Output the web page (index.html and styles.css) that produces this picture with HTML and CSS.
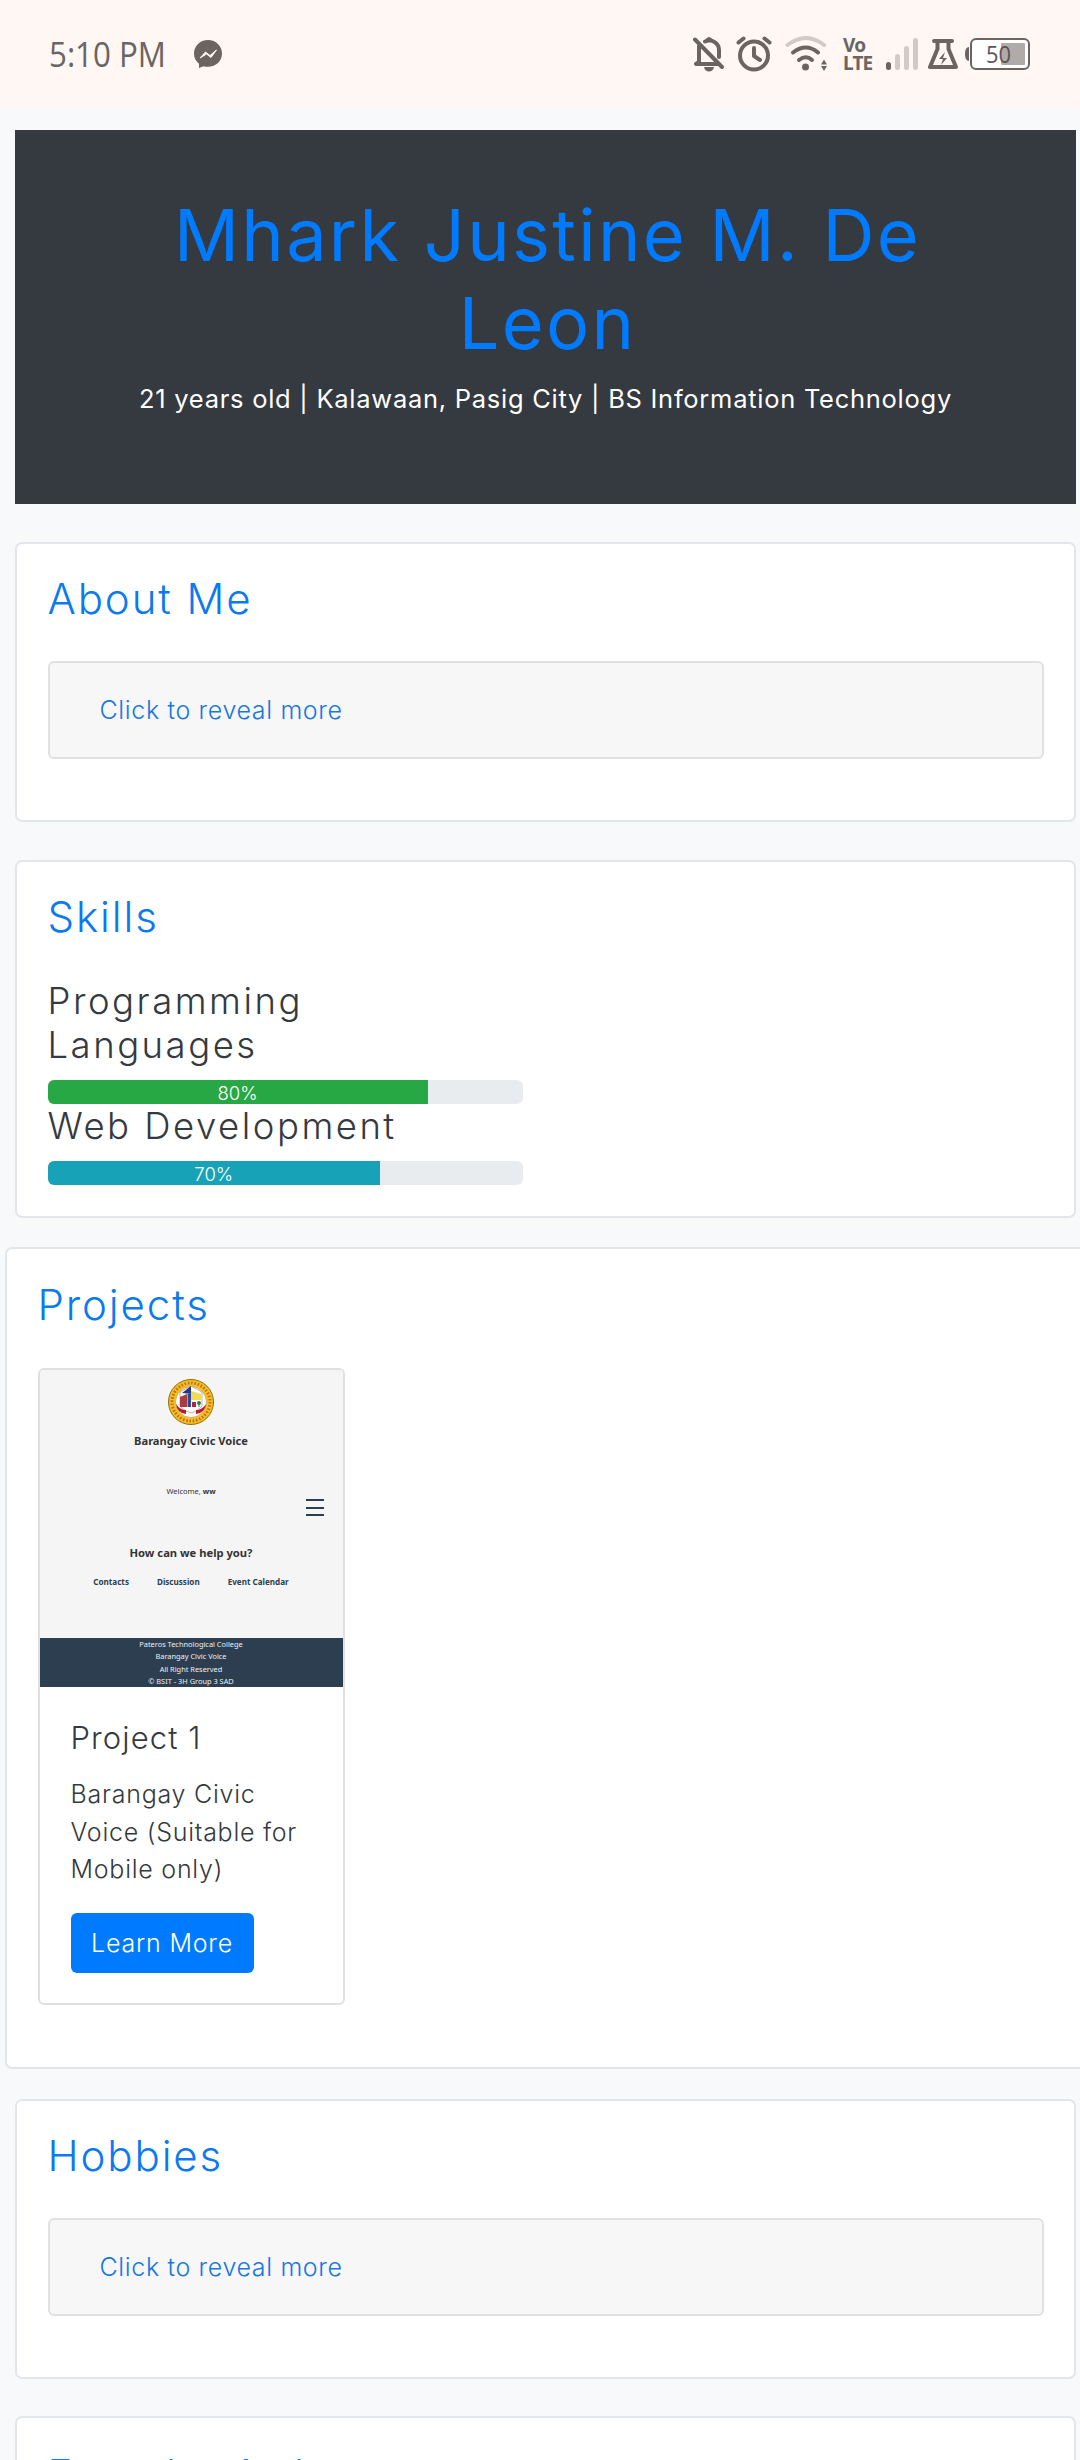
FILE: index.html
```html
<!DOCTYPE html>
<html lang="en">
<head>
<meta charset="utf-8">
<title>Mhark Justine M. De Leon</title>
<link rel="stylesheet" href="styles.css">
</head>
<body>
<div class="status">
  <span class="clock">5:10 PM</span>
  <svg class="messenger" width="28" height="28" viewBox="0 0 28 28"><path d="M14 0C6 0 0 6 0 13.500c0 4.500 2 8 5 10.300V28l4.500-1.800c1.400.4 3 .6 4.500.6 8 0 14-6 14-13.300S22 0 14 0z" fill="#6a6462"/><path d="M6 18l5.500-6 4.500 3.500L22.500 10l-5.500 7.500-4.500-3.500z" fill="#fff7f4" stroke="#fff7f4" stroke-width="1" stroke-linejoin="round"/></svg>
  <div class="status-icons">
    <svg class="i-bell" width="32" height="36" viewBox="0 0 32 36" fill="none" stroke="#6a6462" stroke-width="4"><path d="M6 10v16L3 28h22M12 5.500C20 2.500 26 8 26 14v7M2 3.500l27 27.500" stroke-linejoin="round" stroke-linecap="round"/><path d="M12 4q4-6 8 0zM11 31h10c-1 6-9 6-10 0z" fill="#6a6462" stroke="none"/></svg>
    <svg class="i-alarm" width="36" height="36" viewBox="0 0 36 36" fill="none" stroke="#6a6462" stroke-width="4" stroke-linecap="round"><circle cx="18" cy="19.500" r="14"/><path d="M18 12v8l6 4M2.500 6.500l5-4M33.500 6.500l-5-4" stroke-linejoin="round"/></svg>
    <svg class="i-wifi" width="44" height="36" viewBox="0 0 44 36" fill="none" stroke="#6a6462" stroke-width="4" stroke-linecap="round"><path d="M2.500 9Q21 -5 39 9" stroke="#d0cac8"/><path d="M8 16.500Q21 6.500 33 16.500M14 24Q21 18.500 27 24"/><circle cx="20.500" cy="31" r="3.500" fill="#6a6462" stroke="none"/><path d="M36 28.500l3-5 3 5zM36 30l3 5 3-5z" fill="#6a6462" stroke="none"/></svg>
    <div class="volte"><span>Vo</span><span>LTE</span></div>
    <svg class="i-signal" width="34" height="32" viewBox="0 0 34 32"><rect x="1" y="24" width="5" height="8" rx="2.500" fill="#6a6462"/><rect x="10" y="16" width="5" height="16" rx="2.500" fill="#d0cac8"/><rect x="19" y="8" width="5" height="24" rx="2.500" fill="#d0cac8"/><rect x="28" y="0" width="5" height="32" rx="2.500" fill="#d0cac8"/></svg>
    <svg class="i-flask" width="30" height="30" viewBox="0 0 30 30"><path d="M6 2h18M9.500 2v8L2 28h26L20.500 10V2" fill="none" stroke="#6a6462" stroke-width="4" stroke-linejoin="round" stroke-linecap="round"/><path d="M17 13l-6 7h4l-2 6 6-7h-4z" fill="#6a6462"/></svg>
    <svg class="i-battery" width="66" height="32" viewBox="0 0 66 32"><path d="M4 9v14q-4 0-4-7t4-7z" fill="#6a6462"/><rect x="6" y="1" width="58" height="30" rx="5" fill="#fff" stroke="#6a6462" stroke-width="2"/><rect x="36" y="5" width="24" height="22" rx="1" fill="#b0aaa8"/><text x="21" y="25" class="battery-text" textLength="25" lengthAdjust="spacingAndGlyphs">50</text></svg>
  </div>
</div>
<main class="page">
  <header class="hero">
    <h1>Mhark Justine M. De<br>Leon</h1>
    <p>21 years old | Kalawaan, Pasig City | BS Information Technology</p>
  </header>
  <section class="panel short">
    <h2>About Me</h2>
    <div class="reveal">Click to reveal more</div>
  </section>
  <section class="panel skills">
    <h2>Skills</h2>
    <h3>Programming<br>Languages</h3>
    <div class="progress"><div class="bar green" style="width:80%">80%</div></div>
    <h3>Web Development</h3>
    <div class="progress"><div class="bar teal" style="width:70%">70%</div></div>
  </section>
  <section class="panel projects">
    <h2>Projects</h2>
    <article class="card">
      <div class="thumb">
        <svg class="seal" width="46" height="46" viewBox="0 0 46 46"><circle cx="23" cy="23" r="22.500" fill="#f2c21c" stroke="#8d6b14"/><circle cx="23" cy="23" r="19" fill="none" stroke="#c8642a" stroke-width="3" stroke-dasharray="1.500 1.800"/><circle cx="23" cy="23" r="15.500" fill="#fff" stroke="#b99a4a" stroke-width=".7"/><path d="M12 13l11-6 11 6v14q-5 6-11 7-6-1-11-7z" fill="#fff" stroke="#c0848c" stroke-width=".7"/><path d="M14 14l9-7v8z" fill="#243a82"/><path d="M12 18l7-3v13h-7z" fill="#a83c40"/><path d="M19.500 15h3.500v13h-3.500z" fill="#2b4b9a"/><path d="M23 12l10 3v6H23z" fill="#eedb58"/><path d="M24 23h4v5h-4z" fill="#b0253c"/><circle cx="31" cy="24" r="2" fill="#2d7d46"/><path d="M31 24v4" stroke="#2d7d46"/><path d="M8 25q1 9 10 10v-4q-6 0-10-6zM38 25q-1 9-10 10v-4q6 0 10-6z" fill="#c2182b"/></svg>
        <div class="t-name">Barangay Civic Voice</div>
        <div class="t-welcome">Welcome, <b>ww</b></div>
        <div class="t-menu"><i></i><i></i><i></i></div>
        <div class="t-help">How can we help you?</div>
        <div class="t-links"><span>Contacts</span><span>Discussion</span><span>Event Calendar</span></div>
        <div class="t-foot">Pateros Technological College<br>Barangay Civic Voice<br>All Right Reserved<br>© BSIT - 3H Group 3 SAD</div>
      </div>
      <div class="card-body">
        <h4>Project 1</h4>
        <p>Barangay Civic<br>Voice (Suitable for<br>Mobile only)</p>
        <a class="btn">Learn More</a>
      </div>
    </article>
  </section>
  <section class="panel short">
    <h2>Hobbies</h2>
    <div class="reveal">Click to reveal more</div>
  </section>
  <section class="panel last">
    <h2>Favorite Artist</h2>
  </section>
</main>
</body>
</html>
```
FILE: styles.css
```css
* { box-sizing: border-box; }
html { overflow: hidden; }
body {
  display: flex;
  flex-direction: column;
  margin: 0;
  height: 2460px;
  overflow: hidden;
  background: #f8f9fb;
  color: #343a40;
  font-family: Inter, "Open Sans", sans-serif;
  font-weight: 300;
}
h1, h2, h3, h4, p { margin: 0; font-weight: inherit; white-space: nowrap; }

/* status bar */
.status {
  display: flex;
  flex: none;
  align-items: center;
  height: 108px;
  padding: 0 49px;
  background: #fff7f4;
  color: #6a6462;
}
.clock {
  width: 115px;
  font: 400 34px/40px "Open Sans", sans-serif;
  white-space: nowrap;
  transform: scaleX(.92);
  transform-origin: left;
}
.messenger { margin-left: 30px; }
.status-icons { display: flex; align-items: center; margin-left: auto; }
.i-alarm { margin-left: 11px; }
.i-wifi { margin-left: 13px; }
.volte {
  display: flex;
  flex-direction: column;
  width: 30px;
  margin-left: 14px;
  font: 700 19px/18px "Noto Sans", sans-serif;
  letter-spacing: -.8px;
}
.i-signal { margin-left: 12px; }
.i-flask { margin-left: 9px; }
.i-battery { margin-left: 7px; }
.battery-text { font: 400 23px "Open Sans", sans-serif; fill: #5a5553; }

/* page */
.page { flex: 1; min-height: 0; overflow: hidden; padding: 22px 4px 0 15px; }
.hero {
  height: 374px;
  padding: 61px 0 0;
  background: #343a40;
  text-align: center;
}
.hero h1 {
  padding-left: 4px;
  color: #007bff;
  font-size: 72px;
  line-height: 88px;
  font-weight: 380;
  letter-spacing: 2.300px;
}
.hero p {
  margin-top: 13px;
  color: #fff;
  font-size: 25.500px;
  line-height: 38px;
  font-weight: 380;
  letter-spacing: .730px;
}

.panel {
  margin-top: 38px;
  padding: 30px 30.500px 0;
  border: 2px solid #e2e5e9;
  border-radius: 7px;
  background: #fff;
}
.panel h2 {
  margin-bottom: 37px;
  color: #0b7af0;
  font-size: 42px;
  line-height: 50px;
  font-weight: 350;
  letter-spacing: 1.900px;
}
.short { height: 280px; }
.last { height: 120px; margin-top: 37px; padding-top: 32px; }
.reveal {
  height: 98px;
  padding: 28px 50px;
  border: 2px solid #e0e1e2;
  border-radius: 6px;
  background: #f7f7f7;
  color: #1878e0;
  font-size: 25px;
  line-height: 38px;
  letter-spacing: .650px;
}

/* skills */
.skills { height: 358px; }
.skills h3 { font-size: 36.500px; line-height: 44px; letter-spacing: 2.500px; }
.progress {
  width: 475px;
  height: 24.500px;
  margin-top: 12.500px;
  border-radius: 6px;
  background: #e9ecef;
  overflow: hidden;
}
.bar { height: 100%; color: #fff; font-size: 18.500px; line-height: 26px; text-align: center; }
.green { background: #28a745; }
.teal { background: #17a2b8; }

/* projects */
.projects { width: 1090px; height: 822px; margin: 29px 0 -8px -10px; padding-top: 31px; }
.panel.projects h2 { margin-bottom: 38px; }
.card {
  width: 307px;
  height: 637px;
  border: 2px solid #e0e0e0;
  border-radius: 6px;
  overflow: hidden;
}
.thumb {
  display: flex;
  flex-direction: column;
  height: 317px;
  padding-top: 9px;
  background: #f5f5f5;
  color: #333;
  font-family: "Noto Sans", sans-serif;
  font-weight: 400;
  text-align: center;
  white-space: nowrap;
}
.seal { align-self: center; }
.t-name { margin-top: 8px; font-size: 11.100px; line-height: 16px; font-weight: 700; }
.t-welcome { margin-top: 36px; font-size: 7.500px; line-height: 12px; }
.t-menu {
  display: flex;
  flex-direction: column;
  align-self: flex-end;
  gap: 5.500px;
  width: 18px;
  margin: 2px 19px 0 0;
}
.t-menu i { height: 2px; background: #2c3e50; }
.t-help { margin-top: 28px; font-size: 11.200px; line-height: 18px; font-weight: 700; }
.t-links {
  display: flex;
  justify-content: center;
  gap: 28px;
  margin-top: 14px;
  color: #2c3e50;
  font-size: 8.100px;
  line-height: 12px;
  font-weight: 700;
}
.t-foot {
  height: 49px;
  margin-top: auto;
  background: #2c3e50;
  color: #eef1f4;
  font-size: 7.400px;
  line-height: 12.400px;
}
.card-body { padding: 32px 31px 0; }
.card h4 { font-size: 31px; line-height: 38px; letter-spacing: 1.100px; }
.card p { margin-top: 19px; font-size: 25px; line-height: 37.500px; letter-spacing: .750px; }
.btn {
  display: block;
  width: 183px;
  height: 60px;
  margin-top: 24px;
  border-radius: 6px;
  background: #007bff;
  color: #fff;
  font-size: 25px;
  line-height: 60px;
  letter-spacing: .800px;
  text-align: center;
}
```
